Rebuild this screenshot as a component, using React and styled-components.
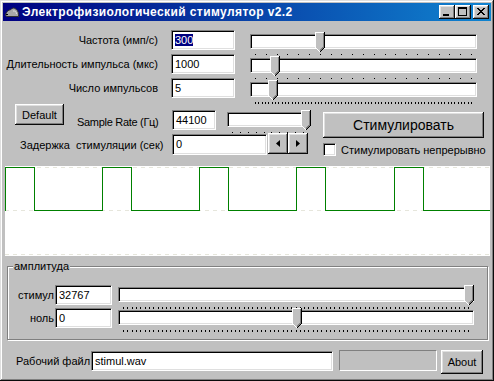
import React from 'react';
import styled, { createGlobalStyle } from 'styled-components';

const GlobalStyle = createGlobalStyle`
  html, body {
    margin: 0;
    padding: 0;
    background: #c0c0c0;
  }
  body {
    font-family: "Liberation Sans", Arial, sans-serif;
    font-size: 11px;
    color: #000;
  }
  * { box-sizing: border-box; }
`;

const Window = styled.div`
  width: 494px;
  height: 381px;
  padding: 3px;
  background: #c0c0c0;
  box-shadow: inset -1px -1px #0a0a0a, inset 1px 1px #dfdfdf,
    inset -2px -2px #808080, inset 2px 2px #fff;
  display: flex;
  flex-direction: column;
  overflow: hidden;
`;

const TitleBar = styled.div`
  height: 18px;
  flex: none;
  display: flex;
  align-items: center;
  padding: 0 2px 0 1px;
  background: linear-gradient(90deg, #000080, #1084d0);
`;

const TitleText = styled.span`
  margin-left: 2px;
  color: #fff;
  font-weight: bold;
  font-size: 12px;
  letter-spacing: 0.4px;
  white-space: nowrap;
`;

const TitleButtons = styled.div`
  margin-left: auto;
  display: flex;
`;

const CaptionButton = styled.button`
  width: 16px;
  height: 14px;
  padding: 0;
  border: 0;
  margin-left: ${p => (p.$gap ? 2 : 0)}px;
  background: #c0c0c0;
  box-shadow: inset -1px -1px #0a0a0a, inset 1px 1px #fff,
    inset -2px -2px #808080, inset 2px 2px #dfdfdf;
  display: block;
  svg { display: block; }
`;

const Body = styled.div`
  display: flex;
  flex-direction: column;
`;

const ParamList = styled.div`
  padding-top: 9px;
  display: flex;
  flex-direction: column;
`;

const Row = styled.div`
  display: flex;
  align-items: flex-start;
  height: ${p => p.$h || 24}px;
`;

const Label = styled.span`
  flex: none;
  width: ${p => p.$w}px;
  margin-left: ${p => p.$ml || 0}px;
  margin-top: ${p => p.$mt || 0}px;
  line-height: ${p => p.$lh || 13}px;
  letter-spacing: ${p => p.$ls || 0}px;
  text-align: ${p => (p.$right ? 'right' : 'left')};
  white-space: pre;
`;

const Field = styled.div`
  flex: none;
  width: ${p => p.$w}px;
  height: ${p => p.$h || 20}px;
  margin-left: ${p => p.$ml || 0}px;
  margin-top: ${p => p.$mt || 0}px;
  padding: 3px 0 0 3px;
  background: #fff;
  border-top: 1px solid #808080;
  border-left: 1px solid #808080;
  border-right: 1px solid #fff;
  border-bottom: 1px solid #fff;
  box-shadow: inset 1px 1px #000, inset -1px -1px #dfdfdf;
  line-height: 13px;
  white-space: nowrap;
  overflow: hidden;
`;

const Selected = styled.span`
  background: #000080;
  color: #fff;
`;

const SliderBox = styled.div`
  position: relative;
  flex: none;
  width: ${p => p.$w}px;
  height: 24px;
  margin-left: ${p => p.$ml || 0}px;
  margin-top: ${p => p.$mt || 0}px;
`;

const Track = styled.div`
  margin-top: 2px;
  height: 15px;
  background: #fff;
  border-top: 1px solid #808080;
  border-left: 1px solid #808080;
  border-right: 1px solid #fff;
  border-bottom: 1px solid #fff;
  box-shadow: inset 1px 1px #000, inset -1px -1px #dfdfdf;
`;

const TickStrip = styled.svg`
  display: block;
  margin-top: 5px;
`;

const ThumbSvg = styled.svg`
  position: absolute;
  top: 0;
  left: ${p => p.$left}px;
  display: block;
`;

const Controls = styled.div`
  display: flex;
  height: 54px;
`;

const LeftBlock = styled.div`
  width: 307px;
  flex: none;
  display: flex;
  flex-direction: column;
`;

const RightBlock = styled.div`
  margin-left: 13px;
  width: 162px;
  display: flex;
  flex-direction: column;
`;

const Button = styled.button`
  flex: none;
  width: ${p => p.$w}px;
  height: ${p => p.$h}px;
  margin-left: ${p => p.$ml || 0}px;
  margin-top: ${p => p.$mt || 0}px;
  padding: 0;
  border: 0;
  background: #c0c0c0;
  color: #000;
  font-family: "Liberation Sans", Arial, sans-serif;
  font-size: ${p => p.$fs || 11}px;
  box-shadow: inset -1px -1px #0a0a0a, inset 1px 1px #fff,
    inset -2px -2px #808080, inset 2px 2px #dfdfdf;
  display: flex;
  align-items: center;
  justify-content: center;
`;

const CheckRow = styled.div`
  margin-top: 5px;
  display: flex;
  align-items: center;
`;

const CheckBox = styled.div`
  width: 13px;
  height: 13px;
  flex: none;
  background: #fff;
  border-top: 1px solid #808080;
  border-left: 1px solid #808080;
  border-right: 1px solid #fff;
  border-bottom: 1px solid #fff;
  box-shadow: inset 1px 1px #000, inset -1px -1px #dfdfdf;
`;

const CheckLabel = styled.span`
  margin-left: 5px;
  white-space: nowrap;
`;

const Graph = styled.div`
  margin: 10px 0 0 2px;
  width: 485px;
  height: 90px;
  background: #fff;
  svg { display: block; }
`;

const Group = styled.fieldset`
  margin: 4px 0 0 4px;
  width: 481px;
  min-width: 0;
  padding: 12px 0 8px 0;
  border: 1px solid #808080;
  box-shadow: inset 1px 1px #fff, 1px 1px #fff;
`;

const Legend = styled.legend`
  margin-left: 5px;
  padding: 0 1px;
  line-height: 13px;
  background: #c0c0c0;
`;

const BottomRow = styled.div`
  margin-top: 10px;
  display: flex;
  align-items: flex-start;
`;

const StatusBox = styled.div`
  flex: none;
  width: 98px;
  height: 21px;
  margin-left: 6px;
  border-top: 1px solid #808080;
  border-left: 1px solid #808080;
  border-right: 1px solid #fff;
  border-bottom: 1px solid #fff;
`;

const Ticks = ({ width, count, tall }) => {
  const span = width - 11;
  const marks = [];
  for (let i = 0; i <= count; i++) marks.push(Math.round(5 + (span * i) / count));
  return (
    <TickStrip width={width} height={2}>
      {marks.map(x => (
        <rect key={x} x={x} y={0} width={1} height={tall ? 2 : 1} fill="#000" />
      ))}
    </TickStrip>
  );
};

const Slider = ({ width, pos, ticks, tall, ml, mt }) => (
  <SliderBox $w={width} $ml={ml} $mt={mt}>
    <Track />
    <Ticks width={width} count={ticks} tall={tall} />
    <ThumbSvg $left={pos} width={10} height={20} shapeRendering="crispEdges">
      <polygon points="0,0 10,0 10,15 5,20 0,15" fill="#c0c0c0" />
      <path d="M0.5 15.5 V0.5 H9" stroke="#fff" fill="none" />
      <path d="M0.5 15.5 L5 20" stroke="#fff" fill="none" />
      <path d="M9.5 0 V15.5 L5 20" stroke="#000" fill="none" />
      <path d="M8.5 1 V15 L5 18.5" stroke="#808080" fill="none" />
    </ThumbSvg>
  </SliderBox>
);

const params = [
  { label: 'Частота (имп/с)', value: '300', selected: true, pos: 65, ticks: 20 },
  { label: 'Длительность импульса (мкс)', value: '1000', pos: 20, ticks: 20 },
  { label: 'Число импульсов', value: '5', pos: 18, ticks: 65, tall: true },
];

const amps = [
  { label: 'стимул', value: '32767', pos: 346 },
  { label: 'ноль', value: '0', pos: 174 },
];

const pulses = [0, 97, 194, 291, 389];

const wavePath = () => {
  let d = 'M0.5 44.5';
  pulses.forEach(x => {
    d += ` H${x + 0.5} V1.5 H${x + 29.5} V44.5`;
  });
  return d + ' H485';
};

const RatIcon = () => (
  <svg width="16" height="14" viewBox="0 0 16 14">
    <path d="M1.5 10.5 C2 7 4 5 7 4.5 C8 3 10 2.5 11 3.5 C13 4.5 14.5 6.5 14.5 9.5 L14.5 11.5 L3 11.5 Z" fill="#a8a8a8" stroke="#303030" />
    <path d="M9 6 C11 5.5 12.5 7 12.5 9" fill="none" stroke="#e0e0e0" />
    <rect x="2" y="9" width="2" height="1" fill="#000" />
  </svg>
);

const ArrowLeft = () => (
  <svg width="4" height="7"><polygon points="4,0 4,7 0,3.5" fill="#000" /></svg>
);
const ArrowRight = () => (
  <svg width="4" height="7"><polygon points="0,0 0,7 4,3.5" fill="#000" /></svg>
);

export default function App() {
  return (
    <>
      <GlobalStyle />
      <Window>
        <TitleBar>
          <RatIcon />
          <TitleText>Электрофизиологический стимулятор v2.2</TitleText>
          <TitleButtons>
            <CaptionButton>
              <svg width="16" height="14" shapeRendering="crispEdges">
                <rect x="4" y="9" width="6" height="2" fill="#000" />
              </svg>
            </CaptionButton>
            <CaptionButton>
              <svg width="16" height="14" shapeRendering="crispEdges">
                <rect x="3.5" y="2.5" width="8" height="8" fill="none" stroke="#000" />
                <rect x="3" y="3" width="9" height="1" fill="#000" />
              </svg>
            </CaptionButton>
            <CaptionButton $gap>
              <svg width="16" height="14" shapeRendering="crispEdges">
                <path d="M4 3 L11 10 M5 3 L12 10 M11 3 L4 10 M12 3 L5 10" stroke="#000" strokeWidth="1" />
              </svg>
            </CaptionButton>
          </TitleButtons>
        </TitleBar>

        <Body>
          <ParamList>
            {params.map(p => (
              <Row key={p.label}>
                <Label $w={155} $lh={20} $right>{p.label}</Label>
                <Field $w={64} $ml={13}>
                  {p.selected ? <Selected>{p.value}</Selected> : p.value}
                </Field>
                <Slider width={227} ml={15} mt={2} pos={p.pos} ticks={p.ticks} tall={p.tall} />
              </Row>
            ))}
          </ParamList>

          <Controls>
            <LeftBlock>
              <Row $h={31}>
                <Button $w={49} $h={21} $ml={12} $mt={2}>Default</Button>
                <Label $w={95} $ml={13} $mt={14} $ls={-0.3}>Sample Rate (Гц)</Label>
                <Field $w={44} $mt={8}>44100</Field>
                <Slider width={82} ml={11} mt={8} pos={74} ticks={9} />
              </Row>
              <Row $h={23}>
                <Label $w={152} $ml={17} $mt={6}>{'Задержка  стимуляции (сек)'}</Label>
                <Field $w={95} $h={21} $mt={1}>0</Field>
                <Button $w={20} $h={21} $ml={1}><ArrowLeft /></Button>
                <Button $w={20} $h={21}><ArrowRight /></Button>
              </Row>
            </LeftBlock>
            <RightBlock>
              <Button $w={161} $h={26} $mt={10} $fs={14}>Стимулировать</Button>
              <CheckRow>
                <CheckBox />
                <CheckLabel>Стимулировать непрерывно</CheckLabel>
              </CheckRow>
            </RightBlock>
          </Controls>

          <Graph>
            <svg width="485" height="90" shapeRendering="crispEdges">
              {[1.5, 44.5, 88.5].map(y => (
                <line key={y} x1="0" x2="485" y1={y} y2={y} stroke="#e6e6dc" strokeDasharray="4 4" />
              ))}
              <path d={wavePath()} fill="none" stroke="#008000" strokeWidth="1" />
            </svg>
          </Graph>

          <Group>
            <Legend>амплитуда</Legend>
            {amps.map(a => (
              <Row key={a.label} $h={23}>
                <Label $w={46} $lh={20} $right>{a.label}</Label>
                <Field $w={57} $ml={1}>{a.value}</Field>
                <Slider width={356} ml={6} pos={a.pos} ticks={80} tall />
              </Row>
            ))}
          </Group>

          <BottomRow>
            <Label $w={75} $ml={13} $mt={5}>Рабочий файл</Label>
            <Field $w={242} $mt={1}>stimul.wav</Field>
            <StatusBox />
            <Button $w={42} $h={24} $ml={4}>About</Button>
          </BottomRow>
        </Body>
      </Window>
    </>
  );
}
